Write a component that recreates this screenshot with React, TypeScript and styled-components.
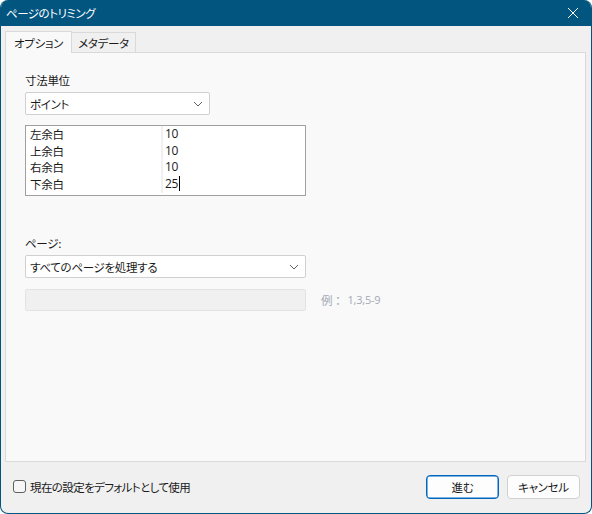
import styled, { createGlobalStyle } from 'styled-components';

const FONT_SIZE = '11.5px';

const Global = createGlobalStyle`
  html, body {
    margin: 0;
    padding: 0;
    background: #ffffff;
  }
  * {
    box-sizing: border-box;
  }
  body {
    font-family: "Noto Sans CJK JP", "Noto Sans", sans-serif;
    font-size: ${FONT_SIZE};
    letter-spacing: -0.3px;
    color: #1a1a1a;
    font-feature-settings: "palt";
  }
`;

const Window = styled.div`
  width: 592px;
  height: 514px;
  display: flex;
  flex-direction: column;
  background-color: #f0f0f0;
  border: 1px solid #02557f;
  border-top: none;
  border-radius: 8px;
  overflow: hidden;
`;

const TitleBar = styled.div`
  height: 26px;
  flex: 0 0 26px;
  display: flex;
  align-items: center;
  justify-content: space-between;
  padding: 0 10px 0 5px;
  background-color: #02557f;
  color: #ffffff;
  line-height: 16px;
  letter-spacing: -0.5px;
`;

const CloseButton = styled.div`
  width: 16px;
  height: 16px;
  display: flex;
  align-items: center;
  justify-content: center;
`;

const Body = styled.div`
  flex: 1;
  display: flex;
  flex-direction: column;
  padding: 5px 5px 0 4px;
`;

const Tabs = styled.div`
  display: flex;
  align-items: flex-end;
  height: 21px;
  position: relative;
  z-index: 1;
`;

const Tab = styled.div<{ $active?: boolean }>`
  height: ${(p) => (p.$active ? '22px' : '20px')};
  margin-bottom: ${(p) => (p.$active ? '-1px' : '0')};
  padding: 0 ${(p) => (p.$active ? '8px' : '6px')};
  display: flex;
  align-items: center;
  background-color: ${(p) => (p.$active ? '#f9f9f9' : '#f0f0f0')};
  border: 1px solid #d9d9d9;
  border-bottom: none;
  border-left: ${(p) => (p.$active ? '1px solid #d9d9d9' : 'none')};
  line-height: 16px;
  color: #1a1a1a;
`;

const Panel = styled.div`
  height: 410px;
  background-color: #f9f9f9;
  border: 1px solid #d9d9d9;
  padding: 19px 0 0 19px;
  display: flex;
  flex-direction: column;
  align-items: flex-start;
`;

const Label = styled.div<{ $top?: number }>`
  margin-top: ${(p) => p.$top ?? 0}px;
  line-height: 16px;
  height: 16px;
  color: #1a1a1a;
`;

const Select = styled.div<{ $width: number }>`
  margin-top: 4px;
  width: ${(p) => p.$width}px;
  height: 23px;
  display: flex;
  align-items: center;
  justify-content: space-between;
  padding: 0 6px 0 4px;
  background-color: #ffffff;
  border: 1px solid #d0d0d0;
  border-radius: 2px;
  line-height: 16px;
`;

const Grid = styled.div`
  margin-top: 10px;
  width: 281px;
  height: 71px;
  border: 1px solid #a0a0a0;
  background-color: #ffffff;
  display: grid;
  grid-template-columns: 131px 2px 1fr;
  padding: 0 0 2px 4px;
`;

const Column = styled.div`
  display: flex;
  flex-direction: column;
`;

const Divider = styled.div`
  background-color: #f0f0f0;
`;

const Cell = styled.div<{ $value?: boolean }>`
  height: 16.5px;
  line-height: 16.5px;
  padding-left: ${(p) => (p.$value ? '2px' : '0')};
  font-family: ${(p) =>
    p.$value ? '"Open Sans", "Noto Sans", sans-serif' : 'inherit'};
  font-size: ${(p) => (p.$value ? '12px' : FONT_SIZE)};
  letter-spacing: ${(p) => (p.$value ? '-0.4px' : '-0.3px')};
  display: flex;
  align-items: center;
`;

const Caret = styled.span`
  display: inline-block;
  width: 1px;
  height: 15px;
  background-color: #000000;
  margin-left: 1px;
`;

const RangeRow = styled.div`
  margin-top: 11px;
  display: flex;
  align-items: center;
  gap: 15px;
`;

const DisabledInput = styled.div`
  width: 281px;
  height: 22px;
  background-color: #f0f0f0;
  border: 1px solid #e3e3e3;
  border-radius: 2px;
`;

const Hint = styled.div`
  color: #a3aab6;
  line-height: 16px;
  display: flex;
  gap: 4px;
  font-feature-settings: normal;
`;

const HintNum = styled.span`
  font-family: "Open Sans", "Noto Sans", sans-serif;
  font-size: 11px;
  letter-spacing: -0.2px;
`;

const Footer = styled.div`
  flex: 1;
  display: flex;
  align-items: center;
  justify-content: space-between;
  padding: 0 6px 2px 8px;
`;

const CheckRow = styled.label`
  display: flex;
  align-items: center;
  gap: 4px;
  line-height: 16px;
  letter-spacing: -0.6px;
`;

const CheckBox = styled.span`
  width: 13px;
  height: 13px;
  border: 1px solid #5f5f5f;
  border-radius: 3px;
  background-color: #f6f6f6;
`;

const Buttons = styled.div`
  display: flex;
  gap: 8px;
`;

const Button = styled.div<{ $primary?: boolean }>`
  width: 73px;
  height: 24px;
  display: flex;
  align-items: center;
  justify-content: center;
  background-color: #fdfdfd;
  border: 1px solid ${(p) => (p.$primary ? '#0067c0' : '#d0d0d0')};
  box-shadow: ${(p) => (p.$primary ? 'inset 0 0 0 0.5px #0067c0' : 'none')};
  border-radius: 4px;
  line-height: 16px;
`;

const Chevron = () => (
  <svg width="10" height="6" viewBox="0 0 10 6">
    <path d="M1 1 L5 5 L9 1" fill="none" stroke="#606060" strokeWidth="1" />
  </svg>
);

const rows = [
  ['左余白', '10'],
  ['上余白', '10'],
  ['右余白', '10'],
  ['下余白', '25'],
];

function App() {
  return (
    <>
      <Global />
      <Window>
        <TitleBar>
          <span>ページのトリミング</span>
          <CloseButton>
            <svg width="12" height="12" viewBox="0 0 12 12">
              <path d="M1 1 L11 11 M11 1 L1 11" stroke="#ffffff" strokeWidth="1" />
            </svg>
          </CloseButton>
        </TitleBar>
        <Body>
          <Tabs>
            <Tab $active>オプション</Tab>
            <Tab>メタデータ</Tab>
          </Tabs>
          <Panel>
            <Label>寸法単位</Label>
            <Select $width={185}>
              <span>ポイント</span>
              <Chevron />
            </Select>
            <Grid>
              <Column>
                {rows.map(([name]) => (
                  <Cell key={name}>{name}</Cell>
                ))}
              </Column>
              <Divider />
              <Column>
                {rows.map(([name, value], i) => (
                  <Cell key={name} $value>
                    {value}
                    {i === rows.length - 1 && <Caret />}
                  </Cell>
                ))}
              </Column>
            </Grid>
            <Label $top={39}>ページ:</Label>
            <Select $width={281}>
              <span>すべてのページを処理する</span>
              <Chevron />
            </Select>
            <RangeRow>
              <DisabledInput />
              <Hint>
                <span>例：</span>
                <HintNum>1,3,5-9</HintNum>
              </Hint>
            </RangeRow>
          </Panel>
          <Footer>
            <CheckRow>
              <CheckBox />
              <span>現在の設定をデフォルトとして使用</span>
            </CheckRow>
            <Buttons>
              <Button $primary>進む</Button>
              <Button>キャンセル</Button>
            </Buttons>
          </Footer>
        </Body>
      </Window>
    </>
  );
}

export default App;
